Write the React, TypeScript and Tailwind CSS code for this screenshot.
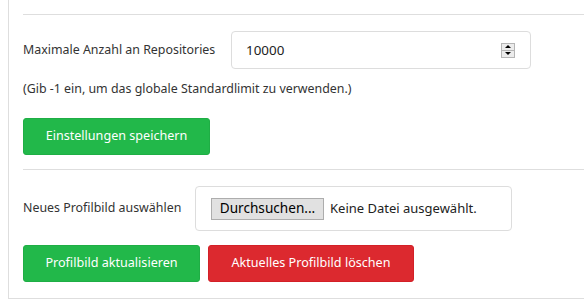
import React from "react";

export default function App() {
  return (
    <div className="w-[584px] h-[301px] bg-white overflow-hidden" style={{ fontFamily: '"Noto Sans", sans-serif' }}>
      <div className="ml-[8px] border-l border-b border-[#dedede] h-[299px] pl-[14px] pt-[14px]">
        <div className="border-t border-[#dedede]" />
        <div className="flex items-center mt-[16px] h-[38px]">
          <div className="w-[208px] text-[12.4px] text-[#333]">Maximale Anzahl an Repositories</div>
          <div className="w-[300px] h-[38px] border border-[#dddddd] rounded-[4px] flex items-center pl-[14px] pr-[15px]">
            <span className="flex-1 text-[13.4px] text-[#222]">10000</span>
            <div className="w-[14px] h-[15px] border border-[#b5b5b5] bg-[#ececec] flex flex-col">
              <div className="flex-1 flex items-center justify-center border-b border-[#b5b5b5]">
                <div className="w-0 h-0 border-l-[3px] border-r-[3px] border-b-[3px] border-l-transparent border-r-transparent border-b-black" />
              </div>
              <div className="flex-1 flex items-center justify-center">
                <div className="w-0 h-0 border-l-[3px] border-r-[3px] border-t-[3px] border-l-transparent border-r-transparent border-t-black" />
              </div>
            </div>
          </div>
        </div>
        <div className="mt-[11px] text-[12.4px] text-[#333] leading-[18px]">(Gib -1 ein, um das globale Standardlimit zu verwenden.)</div>
        <div className="mt-[20px]">
          <button className="h-[37px] w-[187px] rounded-[3px] bg-[#22b84a] border border-[#1fae45] text-white text-[12.6px]">Einstellungen speichern</button>
        </div>
        <div className="mt-[14px] border-t border-[#dedede]" />
        <div className="flex items-center mt-[16px] h-[45px]">
          <div className="w-[172px] text-[12.4px] text-[#333]">Neues Profilbild auswählen</div>
          <div className="w-[317px] h-[45px] border border-[#dddddd] rounded-[4px] flex items-center pl-[15px]">
            <div className="h-[22px] w-[113px] bg-[#e1e1e1] border border-[#adadad] flex items-center justify-center text-[13.6px] text-black">Durchsuchen...</div>
            <span className="ml-[6px] text-[13px] text-[#222]">Keine Datei ausgewählt.</span>
          </div>
        </div>
        <div className="flex gap-[8px] mt-[14px]">
          <button className="h-[37px] w-[177px] rounded-[3px] bg-[#22b84a] border border-[#1fae45] text-white text-[12.6px]">Profilbild aktualisieren</button>
          <button className="h-[37px] w-[206px] rounded-[3px] bg-[#dc292f] border border-[#d32027] text-white text-[12.6px]">Aktuelles Profilbild löschen</button>
        </div>
      </div>
    </div>
  );
}
